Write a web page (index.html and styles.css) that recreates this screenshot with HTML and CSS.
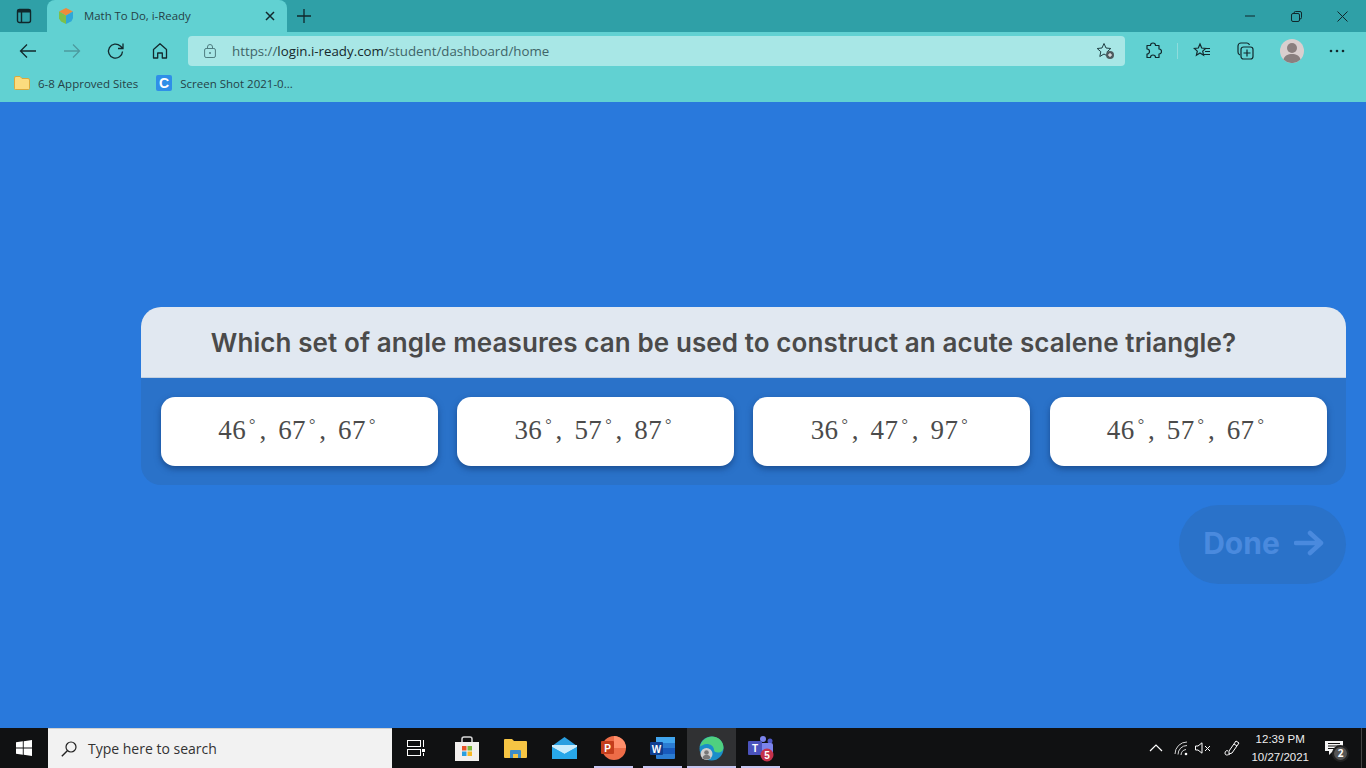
FILE: index.html
```html
<!DOCTYPE html>
<html lang="en">
<head>
<meta charset="utf-8">
<title>Math To Do, i-Ready</title>
<link rel="stylesheet" href="styles.css">
</head>
<body>
<div class="screen">
  <header class="chrome">
    <div class="tabstrip">
      <div class="tabtoggle">
        <svg class="ic" width="16" height="16" viewBox="0 0 16 16"><rect x="1.5" y="1.5" width="13" height="13" rx="2" fill="none" stroke="#10272b" stroke-width="1.4"/><rect x="1.5" y="1.5" width="13" height="3" fill="#10272b"/><path d="M5.5 4v10" stroke="#10272b" stroke-width="1.4"/></svg>
      </div>
      <div class="tab">
        <svg class="favicon" width="18" height="18" viewBox="0 0 18 18"><path d="M9 1l7 3.6L9 8.4 2 4.6z" fill="#ef8b3a"/><path d="M2 4.6l7 3.8V17l-5-2.6-2-3z" fill="#7cc04a"/><path d="M16 4.6L9 8.4V17l5.5-2.8L16 11z" fill="#2fa7d8"/></svg>
        <span class="tabtitle">Math To Do, i-Ready</span>
        <svg class="tabclose" width="10" height="10" viewBox="0 0 10 10"><path d="M1 1l8 8M9 1L1 9" stroke="#12292d" stroke-width="1.5"/></svg>
      </div>
      <svg class="newtab" width="16" height="16" viewBox="0 0 16 16"><path d="M8 1v14M1 8h14" stroke="#10272b" stroke-width="1.3"/></svg>
      <div class="winctl">
        <svg width="10" height="10" viewBox="0 0 10 10"><path d="M0 5h10" stroke="#10272b" stroke-width="1"/></svg>
        <svg width="11" height="11" viewBox="0 0 11 11"><rect x="0.5" y="2.5" width="8" height="8" rx="1.5" fill="none" stroke="#10272b"/><path d="M3 2.500V2a1.500 1.500 0 0 1 1.500-1.500H9A1.500 1.500 0 0 1 10.500 2v4.500A1.500 1.500 0 0 1 9 8" fill="none" stroke="#10272b"/></svg>
        <svg width="11" height="11" viewBox="0 0 11 11"><path d="M0.500 0.500l10 10M10.500 0.500l-10 10" stroke="#10272b"/></svg>
      </div>
    </div>
    <div class="toolbar">
      <svg class="nav" width="18" height="16" viewBox="0 0 18 16"><path d="M17 8H1.500M8 1.500L1.500 8 8 14.500" fill="none" stroke="#12292d" stroke-width="1.3"/></svg>
      <svg class="nav" width="18" height="16" viewBox="0 0 18 16"><path d="M1 8h15.500M10 1.500L16.500 8 10 14.500" fill="none" stroke="#4c9a9f" stroke-width="1.3"/></svg>
      <svg class="nav" width="18" height="18" viewBox="0 0 18 18"><path d="M15.500 9.500a7 7 0 1 1-2.200-5.500L16 6.500M16 1.500v5h-5" fill="none" stroke="#12292d" stroke-width="1.3"/></svg>
      <svg class="nav" width="18" height="18" viewBox="0 0 18 18"><path d="M2.500 7.500L9 1.800l6.500 5.700V16h-4.200v-5H6.700v5H2.500z" fill="none" stroke="#12292d" stroke-width="1.3" stroke-linejoin="round"/></svg>
      <div class="urlbar">
        <svg class="lock" width="12" height="14" viewBox="0 0 12 14"><rect x="0.600" y="4.500" width="10.800" height="9" rx="1.500" fill="none" stroke="#4e7d80"/><path d="M3.500 4.500V3a2.500 2.500 0 0 1 5 0v1.500" fill="none" stroke="#4e7d80"/><circle cx="6" cy="9" r="1" fill="#4e7d80"/></svg>
        <span class="url"><span class="scheme">https://</span>login.i-ready.com<span class="scheme">/student/dashboard/home</span></span>
        <svg class="addfav" width="20" height="18" viewBox="0 0 20 18"><path d="M8 1.500l2 4.500 4.800.5-3.600 3.200 1 4.800L8 12l-4.200 2.500 1-4.800L1.200 6.500 6 6z" fill="none" stroke="#1e3f43"/><circle cx="14" cy="13" r="4" fill="#4d5b5e"/><path d="M14 11v4M12 13h4" stroke="#fff"/></svg>
      </div>
      <div class="tools">
        <svg class="t-ext" width="18" height="18" viewBox="0 0 18 18"><path d="M6.500 3.500a2.500 2.500 0 0 1 5 0h3.500v3.500a2.500 2.500 0 0 1 0 5v3.500h-3.500a2.500 2.500 0 0 0-5 0H3v-3.500a2.500 2.500 0 0 0 0-5V3.500z" fill="none" stroke="#12292d" stroke-width="1.200" stroke-linejoin="round"/></svg>
        <span class="sep"></span>
        <svg class="t-fav" width="18" height="18" viewBox="0 0 18 18"><path d="M7 2l1.700 4 4 .4-3 2.700.9 4.200L7 11l-3.600 2.300.9-4.200-3-2.700 4-.4z" fill="none" stroke="#12292d" stroke-width="1.200"/><path d="M12 6.500h5M12 9.500h5M11 12.500h6" stroke="#12292d" stroke-width="1.100"/></svg>
        <svg class="t-coll" width="18" height="18" viewBox="0 0 18 18"><path d="M4 13a3 3 0 0 1-2-3V4a3 3 0 0 1 3-3h6a3 3 0 0 1 2.500 2" fill="none" stroke="#12292d" stroke-width="1.200"/><rect x="5" y="5" width="12" height="12" rx="2.500" fill="none" stroke="#12292d" stroke-width="1.200"/><path d="M11 7.500v7M7.500 11h7" stroke="#12292d" stroke-width="1.200"/></svg>
        <svg class="t-avatar" width="24" height="24" viewBox="0 0 24 24"><circle cx="12" cy="12" r="12" fill="#d9cfcf"/><circle cx="12" cy="9" r="5" fill="#8a7f7f"/><path d="M3.500 20.500c1-4 4.500-5.500 8.500-5.500s7.500 1.500 8.500 5.500a12 12 0 0 1-17 0z" fill="#8a7f7f"/></svg>
        <svg class="t-more" width="16" height="4" viewBox="0 0 16 4"><circle cx="2" cy="2" r="1.300" fill="#12292d"/><circle cx="8" cy="2" r="1.300" fill="#12292d"/><circle cx="14" cy="2" r="1.300" fill="#12292d"/></svg>
      </div>
    </div>
    <div class="bookmarks">
      <div class="bookmark">
        <svg width="16" height="14" viewBox="0 0 16 14"><path d="M0.500 2A1.500 1.500 0 0 1 2 .5h4l2 2h6A1.500 1.500 0 0 1 15.500 4v8.500A1 1 0 0 1 14.500 13.500h-13A1 1 0 0 1 .5 12.500z" fill="#fbdc7e" stroke="#d9a93d"/></svg>
        <span>6-8 Approved Sites</span>
      </div>
      <div class="bookmark">
        <svg width="16" height="16" viewBox="0 0 16 16"><rect width="16" height="16" rx="2" fill="#2f8fe8"/><text class="favc" x="8" y="12.500" text-anchor="middle">C</text></svg>
        <span>Screen Shot 2021-0...</span>
      </div>
    </div>
  </header>

  <main class="stage">
    <section class="card">
      <h1 class="question">Which set of angle measures can be used to construct an acute scalene triangle?</h1>
      <div class="options">
        <button class="option">46<sup>°</sup>, 67<sup>°</sup>, 67<sup>°</sup></button>
        <button class="option">36<sup>°</sup>, 57<sup>°</sup>, 87<sup>°</sup></button>
        <button class="option">36<sup>°</sup>, 47<sup>°</sup>, 97<sup>°</sup></button>
        <button class="option">46<sup>°</sup>, 57<sup>°</sup>, 67<sup>°</sup></button>
      </div>
    </section>
    <div class="actions">
      <button class="done">Done
        <svg width="30" height="26" viewBox="0 0 30 26"><path d="M2 13h25M16 3l11 10-11 10" fill="none" stroke="#4a8ade" stroke-width="4.500" stroke-linejoin="round" stroke-linecap="round"/></svg>
      </button>
    </div>
  </main>

  <footer class="taskbar">
    <div class="start">
      <svg width="16" height="16" viewBox="0 0 16 16"><path d="M0 2.300l6.800-1v6.300H0zM7.700 1.200L16 0v7.600H7.700zM0 8.400h6.800v6.300L0 13.700zM7.700 8.400H16V16l-8.300-1.200z" fill="#fff"/></svg>
    </div>
    <div class="search">
      <svg width="16" height="16" viewBox="0 0 16 16"><circle cx="10" cy="6" r="5" fill="none" stroke="#222" stroke-width="1.200"/><path d="M6.300 9.700L.8 15.200" stroke="#222" stroke-width="1.400"/></svg>
      <span>Type here to search</span>
    </div>
    <div class="apps">
      <div class="app">
        <svg width="18" height="16" viewBox="0 0 18 16"><rect x="0.500" y="0.500" width="13" height="6" fill="none" stroke="#fff"/><rect x="0.500" y="9.500" width="13" height="6" fill="none" stroke="#fff"/><path d="M16.500 0v7" stroke="#fff"/><rect x="15" y="9" width="3" height="3" fill="#fff"/><path d="M16.500 13v3" stroke="#fff"/></svg>
      </div>
      <div class="app">
        <svg width="24" height="25" viewBox="0 0 24 25"><path d="M7 6V3a2 2 0 0 1 2-2h6a2 2 0 0 1 2 2v3" fill="none" stroke="#d8d8d8" stroke-width="1.500"/><rect y="6" width="24" height="19" fill="#f3f0ee"/><rect x="7" y="10" width="4.500" height="4.500" fill="#e8552a"/><rect x="12.500" y="10" width="4.500" height="4.500" fill="#7db93b"/><rect x="7" y="15.500" width="4.500" height="4.500" fill="#2a9fe0"/><rect x="12.500" y="15.500" width="4.500" height="4.500" fill="#f8b824"/></svg>
      </div>
      <div class="app">
        <svg width="23" height="19" viewBox="0 0 23 19"><path d="M0 1a1 1 0 0 1 1-1h7l2 2h12a1 1 0 0 1 1 1v15a1 1 0 0 1-1 1H1a1 1 0 0 1-1-1z" fill="#f6c544"/><path d="M6 19v-7a1 1 0 0 1 1-1h9a1 1 0 0 1 1 1v7h-3v-4H9v4z" fill="#3d8cc9"/></svg>
      </div>
      <div class="app">
        <svg width="25" height="22" viewBox="0 0 25 22"><path d="M12.500 0L25 9v13H0V9z" fill="#2a9fe0"/><path d="M0 8h25v2L12.500 17 0 10z" fill="#c9ecfb"/><path d="M0 10l12.500 7L25 10v12H0z" fill="#28a8ea"/></svg>
      </div>
      <div class="app">
        <svg width="25" height="24" viewBox="0 0 25 24"><circle cx="13" cy="12" r="12" fill="#ed6c47"/><path d="M13 0a12 12 0 0 1 12 12H13z" fill="#ff8f6b"/><rect y="5" width="13" height="13" rx="1" fill="#c43e1c"/><text class="tile" x="6.500" y="15.500" text-anchor="middle">P</text></svg>
      </div>
      <div class="app">
        <svg width="25" height="22" viewBox="0 0 25 22"><rect x="6" width="19" height="22" rx="1" fill="#2b7cd3"/><rect x="6" width="19" height="6" fill="#41a5ee"/><rect x="6" y="11" width="19" height="6" fill="#185abd"/><rect y="5" width="13" height="13" rx="1" fill="#103f91"/><text class="tile" x="6.500" y="15.500" text-anchor="middle">W</text></svg>
      </div>
      <div class="app active">
        <svg width="25" height="25" viewBox="0 0 25 25"><circle cx="12.500" cy="12.500" r="12" fill="#1b8ec9"/><path d="M1 11C2 4 8 .5 13 .5c6 0 11.500 4.500 11.500 11 0 3-2.500 5-5.500 5-3 0-4-1-4-2.500 0-4-4-6-7-6-3.500 0-6 2-7.500 3z" fill="#4fd07f"/><circle cx="7.500" cy="18" r="6" fill="#cfcfcf"/><circle cx="7.500" cy="16.500" r="2.300" fill="#777"/><path d="M3.500 22c.5-2.500 2-3 4-3s3.500.5 4 3a6 6 0 0 1-8 0z" fill="#777"/></svg>
      </div>
      <div class="app">
        <svg width="26" height="27" viewBox="0 0 26 27"><circle cx="15" cy="4" r="3" fill="#7b83eb"/><circle cx="22" cy="6" r="2.500" fill="#5059c9"/><rect x="11" y="8" width="14" height="12" rx="2" fill="#7b83eb"/><rect y="6" width="14" height="14" rx="1" fill="#4b53bc"/><text class="tile" x="7" y="17" text-anchor="middle">T</text><circle cx="19" cy="20" r="6.500" fill="#c4314b"/><text class="tile" x="19" y="24" text-anchor="middle">5</text></svg>
      </div>
    </div>
    <div class="tray">
      <svg class="tr-chev" width="14" height="8" viewBox="0 0 14 8"><path d="M1 7l6-6 6 6" fill="none" stroke="#fff" stroke-width="1.200"/></svg>
      <svg class="tr-wifi" width="15" height="15" viewBox="0 0 15 15"><path d="M1 13a12 12 0 0 1 12-12M4 13.500a9 9 0 0 1 9-9M7 14a6 6 0 0 1 5-5.500" fill="none" stroke="#d5d5d5"/><circle cx="12" cy="13" r="1.300" fill="#fff"/></svg>
      <svg class="tr-vol" width="16" height="12" viewBox="0 0 16 12"><path d="M.5 4h2.500L7 .8v10.400L3 8H.5z" fill="none" stroke="#fff"/><path d="M10 4l5 5M15 4l-5 5" stroke="#fff"/></svg>
      <svg class="tr-pen" width="18" height="18" viewBox="0 0 18 18"><path d="M6 12L13 2l3 2-7 10-3 1zM11 5l3 2M7 15c-2 1-5 2-5-1 0-2 2-3 3-2" fill="none" stroke="#fff"/></svg>
      <div class="clock"><span>12:39 PM</span><span>10/27/2021</span></div>
      <div class="notify">
        <svg width="18" height="14" viewBox="0 0 18 14"><path d="M0 0h18v10H8l-4 4v-4H0z" fill="#f4f4f4"/><path d="M3 2.500h12M3 5h12M3 7.500h8" stroke="#111"/></svg>
        <span class="badge">2</span>
      </div>
      <span class="peek"></span>
    </div>
  </footer>
</div>
</body>
</html>
```

FILE: styles.css
```css
* { box-sizing: border-box; }
html, body { margin: 0; padding: 0; }
.screen {
  width: 1366px; height: 768px; display: flex; flex-direction: column; overflow: hidden;
  font-family: "Open Sans", "Liberation Sans", sans-serif; background: #2979dc;
}
.chrome { flex: none; height: 102px; background: #61d1d2; color: #1a3236; }
.tabstrip { height: 32px; background: #2fa0a7; display: flex; align-items: center; position: relative; }
.tabtoggle { width: 47px; height: 32px; display: flex; align-items: center; justify-content: center; }
.tab {
  width: 240px; height: 32px; background: #61d1d2; border-radius: 8px 8px 0 0;
  display: flex; align-items: center; padding: 0 12px 0 10px;
}
.favicon { margin-right: 9px; }
.tabtitle { font-family: "Open Sans", sans-serif; font-size: 11.4px; flex: 1; color: #254146; padding-bottom: 2px; }
.newtab { margin-left: 9px; }
.winctl { margin-left: auto; display: flex; gap: 35px; align-items: center; padding-right: 18px; }
.winctl svg:first-child { margin-right: 1px; }

.toolbar { height: 38px; display: flex; align-items: center; padding: 0 20px 0 19px; }
.nav { margin-right: 26px; }
.nav:nth-child(4) { margin-right: 19px; }
.urlbar {
  width: 937px; height: 30px; background: #a8e7e6; border-radius: 4px; flex: none;
  display: flex; align-items: center; padding: 0 9px 0 16px;
}
.lock { margin-right: 16px; }
.url { font-family: "Open Sans", sans-serif; font-size: 13.3px; color: #15292c; flex: 1; }
.scheme { color: #3f6568; }
.tools { flex: 1; display: flex; align-items: center; padding-left: 19px; }
.sep { width: 1px; height: 16px; background: #8fdcdc; margin-left: 15px; }
.t-fav { margin-left: 15px; }
.t-coll { margin-left: 25px; }
.t-avatar { margin-left: 26px; }
.t-more { margin-left: 25px; }

.bookmarks { height: 32px; display: flex; align-items: center; padding: 0 0 6px 14px; gap: 18px; font-size: 11.5px; color: #254146; }
.bookmark { display: flex; align-items: center; gap: 8px; }
.favc { font: 700 14px "Liberation Sans", sans-serif; fill: #fff; }

.stage { flex: 1; padding: 205px 20px 0 141px; background: #2979dc; }
.card { border-radius: 20px; background: #2a72c9; height: 178px; width: 1205px; overflow: hidden; }
.question {
  margin: 0; height: 71px; background: #e1e8f1; border-bottom: 1px solid #c3d0e0;
  display: flex; align-items: center; justify-content: center; padding-right: 40px;
  font: 600 26px Inter, "Open Sans", sans-serif; color: #4a4a4a; letter-spacing: .1px; white-space: nowrap;
}
.options { display: flex; gap: 19.2px; padding: 19px 19px 0 20px; }
.option {
  width: 277px; height: 69px; border: 0; background: #fff; border-radius: 14px; flex: none;
  box-shadow: 0 3px 6px rgba(15, 50, 100, .55);
  font: 400 27px "Liberation Serif", serif; color: #4b4b4b; letter-spacing: .4px; word-spacing: 4.5px; padding: 0 5px 3px 0;
}
.option sup { font-size: 16px; line-height: 0; vertical-align: 9px; margin-right: 3.5px; margin-left: 3px; }
.option sup:last-child { margin-right: 0; }

.actions { display: flex; justify-content: flex-end; margin-top: 20px; width: 1205px; }
.done {
  width: 167px; height: 79px; border: 0; border-radius: 40px; background: #2a72c9;
  display: flex; align-items: center; justify-content: center; gap: 14px; padding: 0 0 4px 2px;
  font: 700 30px Inter, "Open Sans", sans-serif; color: #4a8ade;
}

.taskbar { flex: none; height: 40px; background: #101112; display: flex; align-items: center; color: #fff; }
.start { width: 48px; display: flex; justify-content: center; }
.search {
  width: 344px; height: 40px; background: #f2f2f2; border-top: 1px solid #d0d0d0; color: #333;
  display: flex; align-items: center; gap: 11px; padding-left: 13px; font-size: 14px;
}
.apps { display: flex; align-items: center; }
.app { width: 49px; height: 40px; display: flex; align-items: center; justify-content: center; position: relative; }
.app:first-child { width: 50px; padding-right: 2px; }
.app.active { background: #303133; }
.app:nth-child(n+5)::after {
  content: ""; position: absolute; left: 5px; right: 5px; bottom: 0; height: 2px; background: #c5c5f0;
}
.app.active::after { left: 0; right: 0; }
.tile { font: 700 10px "Liberation Sans", sans-serif; fill: #fff; }
.tray { margin-left: auto; display: flex; align-items: center; height: 40px; }
.tr-wifi { margin-left: 11px; }
.tr-vol { margin-left: 6px; }
.tr-pen { margin-left: 12px; }
.clock {
  display: flex; flex-direction: column; align-items: center; margin-left: 10px;
  font: 11.5px/18px "Liberation Sans", sans-serif; color: #eee;
}
.notify { position: relative; width: 24px; height: 24px; margin-left: 16px; }
.notify svg { display: block; margin-top: 5px; }
.badge {
  position: absolute; right: 0; bottom: -2px; width: 17px; height: 17px; border-radius: 50%;
  background: #555; border: 2px solid #222; color: #fff; font-size: 10px; font-weight: 700; line-height: 13px; text-align: center;
}
.peek { width: 5px; height: 40px; border-left: 1px solid #444; margin-left: 12px; }
```
